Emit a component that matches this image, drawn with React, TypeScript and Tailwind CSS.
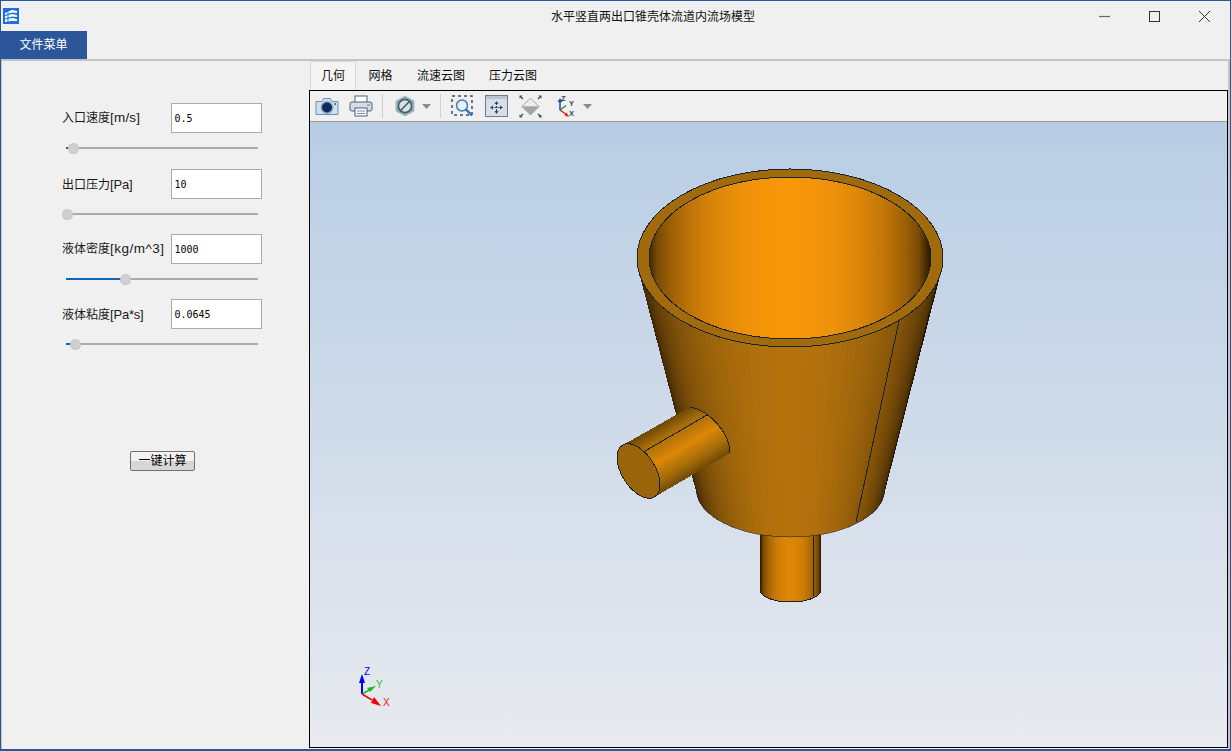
import React from "react";

const UI = "font-['Liberation_Sans','Noto_Sans_CJK_SC',sans-serif]";

// light falloff across a round surface, t goes -1..1
const shade = (t: number, peak: [number, number, number], amb = 0.12) => {
  const k = amb + (1 - amb) * Math.sqrt(Math.max(0, 1 - t * t));
  return `rgb(${Math.round(peak[0] * k)},${Math.round(peak[1] * k)},${Math.round(peak[2] * k)})`;
};

const stops = (peak: [number, number, number], amb = 0.12) =>
  Array.from({ length: 25 }, (_, i) => {
    const t = -1 + (i / 24) * 2;
    return <stop key={i} offset={`${(i / 24) * 100}%`} stopColor={shade(t, peak, amb)} />;
  });

const LINE = "#1b2230";

function Funnel() {
  // cone built from thin strips so the dark edges follow the taper
  const strips = Array.from({ length: 90 }, (_, i) => {
    const a0 = -Math.PI / 2 + (i / 90) * Math.PI;
    const a1 = -Math.PI / 2 + ((i + 1) / 90) * Math.PI;
    const p = (a: number, cx: number, cy: number, rx: number, ry: number) =>
      `${cx + rx * Math.sin(a)},${cy + ry * Math.cos(a)}`;
    const pts = [
      p(a0, 790, 258, 153, 89),
      p(a1, 790, 258, 153, 89),
      p(a1, 790.5, 490, 94, 47),
      p(a0, 790.5, 490, 94, 47),
    ].join(" ");
    return <polygon key={i} points={pts} fill={shade(Math.sin((a0 + a1) / 2), [179, 114, 12], 0.14)} />;
  });

  return (
    <svg viewBox="310 122 917 625" className="block w-full h-full" shapeRendering="crispEdges">
      <defs>
        <linearGradient id="inner" gradientUnits="userSpaceOnUse" x1="645" y1="0" x2="931" y2="0">
          {stops([247, 151, 10], 0.14)}
        </linearGradient>
        <linearGradient id="outlet" gradientUnits="userSpaceOnUse" x1="760" y1="0" x2="821" y2="0">
          {stops([220, 134, 5], 0.16)}
        </linearGradient>
        <linearGradient id="side" gradientUnits="userSpaceOnUse" x1="622" y1="442" x2="655" y2="498">
          <stop offset="0%" stopColor="#5c3d08" />
          <stop offset="25%" stopColor="#a56c08" />
          <stop offset="55%" stopColor="#dc8706" />
          <stop offset="80%" stopColor="#a56c08" />
          <stop offset="100%" stopColor="#6b4708" />
        </linearGradient>
      </defs>

      {/* bottom outlet */}
      <path d="M760 525 L760 590 A30.5 12 0 0 0 821 590 L821 525 Z" fill="url(#outlet)" />
      <path d="M760 590 A30.5 12 0 0 0 821 590" fill="none" stroke={LINE} />
      <path d="M813 535 L813 596" stroke={LINE} />

      {/* cone */}
      {strips}
      <path d="M696.5 490 A94 47 0 0 0 884.5 490" fill="none" stroke={LINE} strokeOpacity="0.55" />
      <path d="M899 321 L856 522" stroke={LINE} />

      {/* rim and inside */}
      <ellipse cx="790" cy="258" rx="153" ry="89" fill="#a16a0a" stroke={LINE} />
      <ellipse cx="790" cy="258" rx="141" ry="81" fill="url(#inner)" stroke={LINE} />

      {/* side inlet */}
      <path d="M622.8 445.1 L690 407 C708 410 730 432 730 453 L654.7 496.9 Z" fill="url(#side)" />
      <path d="M690 407 C708 410 730 432 730 453" fill="none" stroke={LINE} />
      <path d="M645 451 L707 415" stroke={LINE} />
      <ellipse cx="638.5" cy="471" rx="30.5" ry="16.7" transform="rotate(58 638.5 471)" fill="#9a640a" stroke={LINE} />

      {/* axis triad */}
      <g shapeRendering="auto">
        <path d="M362 694 L362 680" stroke="#0000ff" strokeWidth="2" />
        <path d="M362 674 L365 683 L359 683 Z" fill="#0000ff" />
        <path d="M362 694 L371 689" stroke="#22b422" strokeWidth="1.5" />
        <path d="M376 686 L370 692 L367 688 Z" fill="#22b422" />
        <path d="M362 694 L372 700" stroke="#f00000" strokeWidth="1.5" />
        <path d="M381 706 L371 703 L374 697 Z" fill="#f00000" />
        <text x="364" y="675" fontSize="10" fill="#0000ff" fontFamily="Liberation Sans">Z</text>
        <text x="376" y="688" fontSize="10" fill="#33bb33" fontFamily="Liberation Sans">Y</text>
        <text x="383" y="706" fontSize="10" fill="#e02020" fontFamily="Liberation Sans">X</text>
      </g>
    </svg>
  );
}

function Slider({ pos }: { pos: number }) {
  return (
    <div className="relative h-[30px] ml-[64px] w-[192px] flex items-center">
      <div className="h-[2px] w-full bg-[#ababab]" />
      <div className="absolute left-0 top-[14px] h-[2px] bg-[#0f62b5]" style={{ width: pos }} />
      <div
        className="absolute top-[9.5px] w-[11px] h-[11px] rounded-full bg-[#cfcfcf] border border-dotted border-[#bdbdbd]"
        style={{ left: pos - 5.5 }}
      />
    </div>
  );
}

function Field({ label, unit, unitClass, value, pos }: { label: string; unit: string; unitClass: string; value: string; pos: number }) {
  return (
    <div>
      <div className="flex items-center h-[30px] pl-[60px]">
        <div className="w-[109px] pt-px text-[12px] text-[#1a1a1a] whitespace-nowrap">
          {label}
          <span className={unitClass}>{unit}</span>
        </div>
        <div className="w-[91px] h-[30px] bg-white border border-[#ababab] flex items-center pl-[2.5px] font-['DejaVu_Sans_Mono',monospace] text-[10px] text-black">
          {value}
        </div>
      </div>
      <Slider pos={pos} />
    </div>
  );
}

const Tri = () => (
  <svg width="9" height="5" viewBox="0 0 9 5" className="block">
    <path d="M0 0H9L4.5 5Z" fill="#8b8b8b" />
  </svg>
);
const Sep = () => <div className="w-px h-[24px] bg-[#cfcfcf]" />;

function Toolbar() {
  return (
    <div className="h-[31px] shrink-0 bg-[#f0f0f0] border-b border-[#9a9a9a] flex items-center">
      {/* camera */}
      <svg width="24" height="20" viewBox="0 0 24 20" className="ml-[5px]">
        <path d="M1 5.5 H7 L8.5 2.5 H15.5 L17 5.5 H23 V18.5 H1 Z" fill="#cfe0f0" stroke="#6f8fb0" strokeLinejoin="round" />
        <circle cx="12" cy="11.5" r="6.5" fill="#8aa6c4" />
        <circle cx="12" cy="11.5" r="5" fill="#0f2a5c" />
        <circle cx="20" cy="8" r="1" fill="#3a5a80" />
      </svg>
      {/* printer */}
      <svg width="24" height="22" viewBox="0 0 24 22" className="ml-[10px]">
        <rect x="6" y="1" width="12" height="7" fill="#fff" stroke="#4a6078" />
        <rect x="1" y="7" width="22" height="9" rx="2" fill="#d5dde5" stroke="#4a6078" />
        <rect x="6" y="13" width="12" height="8" fill="#fff" stroke="#4a6078" />
        <path d="M8 16H16M8 18.5H16" stroke="#7a8ea3" />
        <path d="M18 10H21" stroke="#6a7f94" />
      </svg>
      <div className="ml-[9px]"><Sep /></div>
      {/* hidden-line toggle */}
      <svg width="20" height="22" viewBox="0 0 20 22" className="ml-[12px]">
        <path d="M10 1 L19 6 V16 L10 21 L1 16 V6 Z" fill="#86a6ac" stroke="#a9c1c5" />
        <circle cx="10" cy="11" r="6.5" fill="#d6e2e4" stroke="#3f5a66" strokeWidth="1.5" />
        <path d="M5.8 15.2 L14.2 6.8" stroke="#3f5a66" strokeWidth="1.6" />
      </svg>
      <div className="ml-[7px]"><Tri /></div>
      <div className="ml-[9px]"><Sep /></div>
      {/* zoom box */}
      <svg width="23" height="22" viewBox="0 0 23 22" className="ml-[10px]">
        <rect x="1" y="1" width="20" height="19" fill="none" stroke="#344e74" strokeWidth="1.5" strokeDasharray="3 3" />
        <circle cx="11" cy="10.5" r="5.5" fill="#e6f0f8" stroke="#3f7fb5" strokeWidth="1.5" />
        <path d="M15 14.5 L21 20.5" stroke="#2d6fb0" strokeWidth="2.4" />
      </svg>
      {/* fit */}
      <svg width="23" height="22" viewBox="0 0 23 22" className="ml-[11px]">
        <rect x="0.5" y="0.5" width="22" height="21" fill="#d8dee6" stroke="#6b7d90" />
        <rect x="1" y="1" width="21" height="3" fill="#b8c4d0" />
        <path d="M11.5 8V17M6.5 12.5H16.5" stroke="#2c4566" strokeDasharray="2 1" />
        <path d="M11.5 6L9.5 9H13.5ZM11.5 19L9.5 16H13.5ZM5 12.5L8 10.5V14.5ZM18 12.5L15 10.5V14.5Z" fill="#2c4566" />
      </svg>
      {/* isometric view */}
      <svg width="23" height="23" viewBox="0 0 23 23" className="ml-[11px]">
        <path d="M11.5 3 L20 11.5 L11.5 20 L3 11.5 Z" fill="#b5b5b5" stroke="#9aa4ae" />
        <path d="M11.5 3.5 L19.5 11.5 H3.5 Z" fill="#ededed" />
        <path d="M3.5 11.5 H19.5 L11.5 19.5 Z" fill="#a5a5a5" />
        <path d="M1.5 1.5 L4 4M21.5 1.5 L19 4M1.5 21.5 L4 19M21.5 21.5 L19 19" stroke="#2f4a6b" strokeWidth="1.4" />
        <path d="M0.5 0.5H3.5L0.5 3.5ZM22.5 0.5H19.5L22.5 3.5ZM0.5 22.5H3.5L0.5 19.5ZM22.5 22.5H19.5L22.5 19.5Z" fill="#2f4a6b" />
      </svg>
      {/* axes */}
      <svg width="23" height="23" viewBox="0 0 23 23" className="ml-[13px]">
        <path d="M5 15 V6" stroke="#1848c8" strokeWidth="1.5" />
        <path d="M5 3 L7.5 7 H2.5 Z" fill="#1848c8" />
        <path d="M5 15 L11 10.5" stroke="#1ea01e" strokeWidth="1.5" />
        <path d="M5 15 L12 20" stroke="#e02020" strokeWidth="1.5" />
        <path d="M14 22 L9.5 20.5 L11.5 17.5 Z" fill="#e02020" />
        <text x="6" y="6" fontSize="7.5" fontWeight="700" fill="#33475f" fontFamily="Liberation Sans">Z</text>
        <text x="14" y="11" fontSize="7.5" fontWeight="700" fill="#33475f" fontFamily="Liberation Sans">Y</text>
        <text x="14" y="21" fontSize="7.5" fontWeight="700" fill="#33475f" fontFamily="Liberation Sans">X</text>
      </svg>
      <div className="ml-[5px]"><Tri /></div>
    </div>
  );
}

export default function App() {
  return (
    <div className={`w-[1231px] h-[751px] bg-[#f0f0f0] border border-b-2 border-[#2b579a] flex flex-col overflow-hidden ${UI}`}>
      {/* title bar */}
      <div className="h-[30px] shrink-0 flex items-center">
        <svg width="16" height="16" viewBox="0 0 16 16" className="ml-[2px]">
          <rect width="16" height="16" fill="#1a6fe0" />
          <path d="M2 5 L9 2 L14 3 V5 L9 4.5 L2 7 ZM2 8 L9 6 L14 7 V9 L9 8.5 L2 10.5 ZM2 11.5 L9 10 L14 11 V13 L9 13 L2 14 Z" fill="#fff" />
          <path d="M5 4V14" stroke="#1a6fe0" />
        </svg>
        <div className="ml-[532px] pt-px text-[12px] text-[#111] whitespace-nowrap">水平竖直两出口锥壳体流道内流场模型</div>
        <div className="ml-auto flex items-center mr-[20px] gap-[39px]">
          <svg width="11" height="11" viewBox="0 0 11 11"><path d="M0 5.5H11" stroke="#666" strokeWidth="1.2" /></svg>
          <svg width="11" height="11" viewBox="0 0 11 11"><rect x="0.5" y="0.5" width="10" height="10" fill="none" stroke="#333" /></svg>
          <svg width="11" height="11" viewBox="0 0 11 11"><path d="M0 0L11 11M11 0L0 11" stroke="#333" /></svg>
        </div>
      </div>

      {/* menu row */}
      <div className="h-[28px] shrink-0 flex">
        <div className="-ml-px w-[87px] bg-[#2b579a] text-white text-[12px] flex items-center justify-center">文件菜单</div>
      </div>

      <div className="flex-1 min-h-0 flex border-t-2 border-[#c4c4c4] border-l border-l-[#c4c4c4] border-r-2 border-r-[#c4c4c4]">
        {/* parameters */}
        <div className="w-[307px] shrink-0 bg-[#f0f0f0] pt-[42px]">
          <div className="mb-[6px]"><Field label="入口速度" unit="[m/s]" unitClass="text-[13.5px] tracking-[0.2px]" value="0.5" pos={7} /></div>
          <div className="mb-[5px]"><Field label="出口压力" unit="[Pa]" unitClass="text-[13px] tracking-[-0.2px]" value="10" pos={1} /></div>
          <div className="mb-[5px]"><Field label="液体密度" unit="[kg/m^3]" unitClass="text-[13.5px] tracking-[0.5px]" value="1000" pos={59} /></div>
          <Field label="液体粘度" unit="[Pa*s]" unitClass="text-[13px] tracking-[-0.2px]" value="0.0645" pos={9} />
          <div className="mt-[92px] ml-[128px] w-[65px] h-[20px] border border-[#707070] rounded-[2px] bg-gradient-to-b from-[#f2f2f2] from-50% to-[#d6d6d6] to-50% flex items-center justify-center text-[12px] text-black">
            一键计算
          </div>
        </div>

        {/* view */}
        <div className="flex-1 min-w-0 flex flex-col">
          <div className="h-[29px] shrink-0 flex items-end pl-px text-[12px] text-[#111]">
            <div className="w-[46px] h-[29px] bg-[#f4f4f4] border border-b-0 border-[#d9d9d9] flex items-center justify-center">几何</div>
            <div className="w-[49px] h-[29px] flex items-center justify-center">网格</div>
            <div className="w-[72px] h-[29px] flex items-center justify-center">流速云图</div>
            <div className="w-[72px] h-[29px] flex items-center justify-center">压力云图</div>
          </div>
          <div className="flex-1 min-h-0 flex flex-col border border-black mb-px">
            <Toolbar />
            <div className="flex-1 min-h-0 bg-gradient-to-b from-[#b8cde4] to-[#e8eaef]">
              <Funnel />
            </div>
          </div>
        </div>
      </div>
    </div>
  );
}
